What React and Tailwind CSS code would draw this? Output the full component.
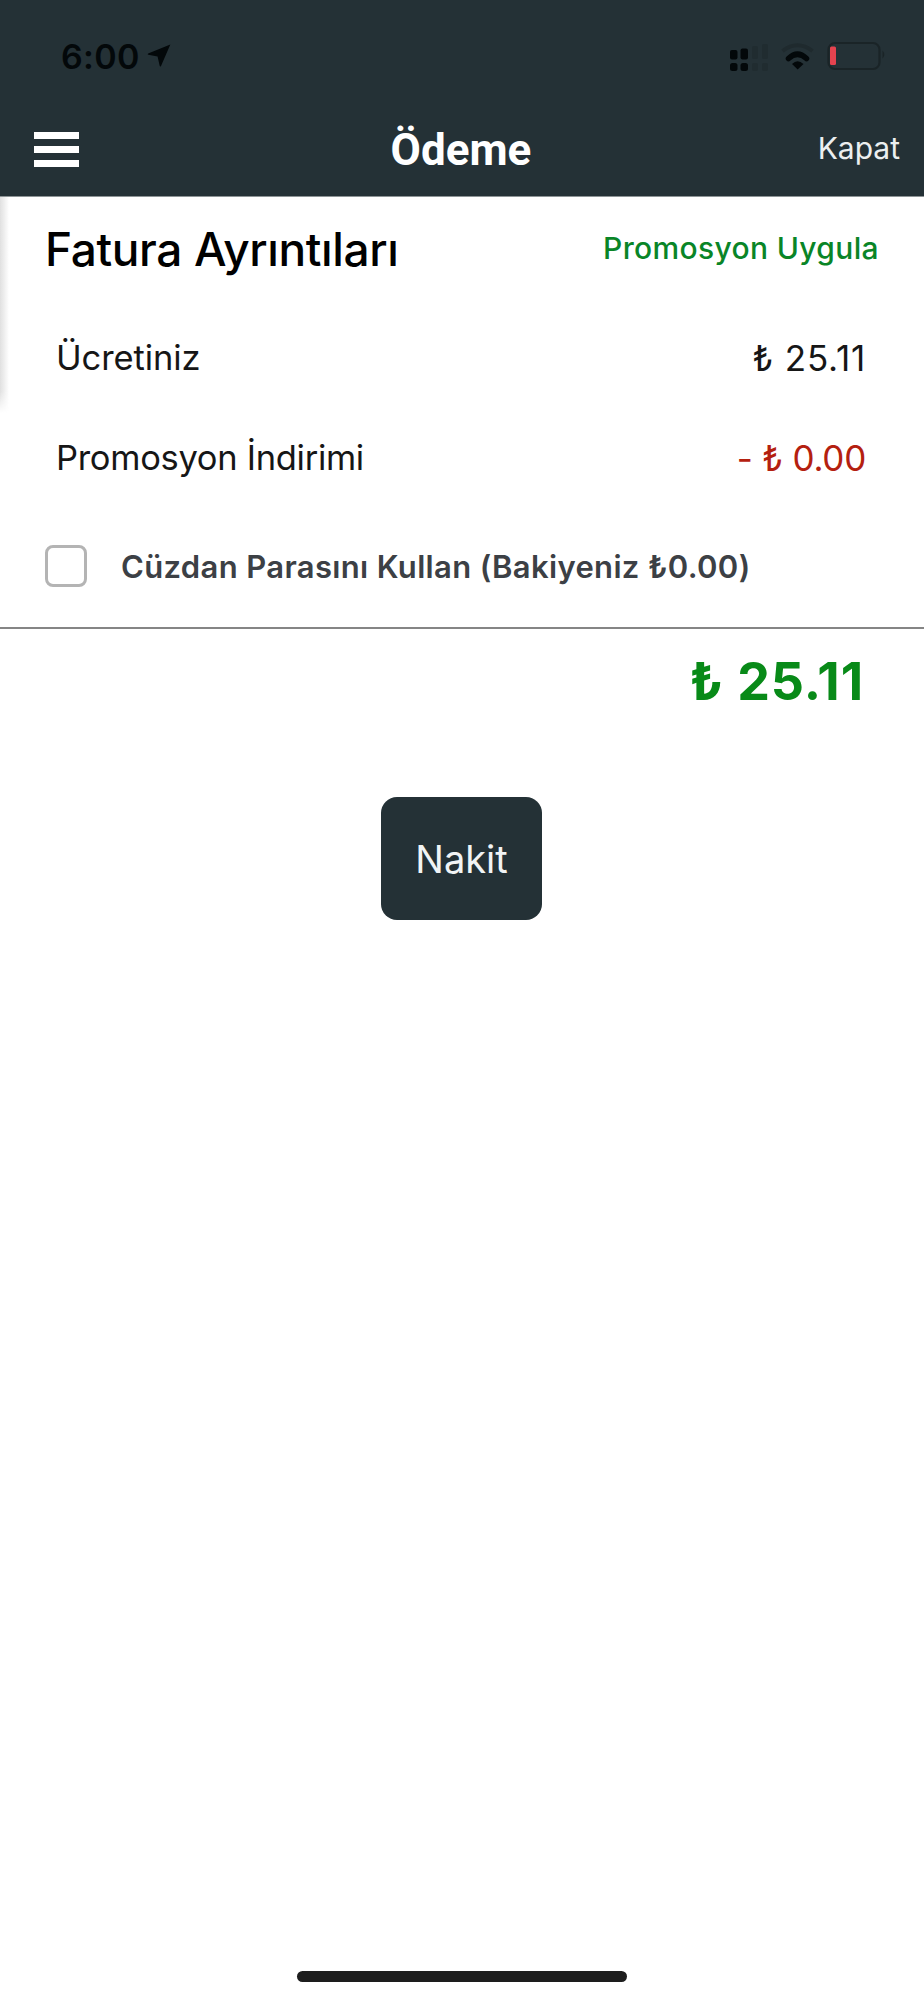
function StatusBar() {
  return (
    <div className="flex h-[100px] items-center justify-between pt-[13px] pr-[37px] pl-[61px]">
      <div className="flex items-center gap-[7px]">
        <span className="text-[34px] leading-none font-semibold tracking-[0.3px] text-[#03080a]">6:00</span>
        <svg width="24" height="25" viewBox="0 0 25 25" fill="#03080a" className="mb-[3px]">
          <path d="M24.3 1 1.2 10.4q-1.2.8.2 1.3l9.6 1.8 2.2 9.8q.6 1.400 1.4.1Z" />
        </svg>
      </div>
      <svg width="162" height="40" viewBox="725 37 162 40" fill="none">
        <g fill="#03080a">
          <rect x="730" y="50" width="7.500" height="9.500" rx="2" />
          <rect x="740.500" y="48.500" width="7.500" height="11" rx="2" />
          <rect x="730" y="63" width="7.500" height="8" rx="2.500" />
          <rect x="740.500" y="63" width="7.500" height="8" rx="2.500" />
        </g>
        <g fill="#202c30">
          <rect x="752" y="46" width="6" height="13" rx="2" />
          <rect x="762" y="44" width="6" height="15" rx="2" />
          <rect x="752" y="63" width="6" height="8" rx="2" />
          <rect x="762" y="63" width="6" height="8" rx="2" />
        </g>
        <path d="M782.500 51Q797.500 39.500 812.500 51" stroke="#1f2a2e" strokeWidth="4" />
        <path d="M788.500 58.500Q797.500 50 806.500 58.500" stroke="#03080a" strokeWidth="5.500" strokeLinecap="round" />
        <path d="M792 64Q797.500 58.500 803.500 64L797.700 69.500Z" fill="#03080a" />
        <rect x="828.500" y="43" width="51" height="26" rx="6.500" stroke="#1a2427" strokeWidth="2.200" />
        <rect x="830" y="46.500" width="6" height="18.500" rx="1.500" fill="#e5434f" />
        <path d="M882.500 50.500Q886 54.500 882.500 58.500Z" fill="#1a2427" />
      </svg>
    </div>
  );
}

function TitleBar() {
  return (
    <div className="grid h-24 grid-cols-3 items-center pr-[24px] pl-[34px]">
      <button aria-label="Menu" className="flex w-[45px] flex-col gap-[7px] pt-[2px]">
        <span className="h-[7px] bg-white" />
        <span className="h-[7px] bg-white" />
        <span className="h-[7px] bg-white" />
      </button>
      <h1 className="-ml-[12px] pt-[3px] text-center font-['Roboto',sans-serif] text-[44px] leading-none font-bold text-white">Ödeme</h1>
      <button className="text-right text-[30px] leading-none text-[#eceff0]">Kapat</button>
    </div>
  );
}

export default function App() {
  return (
    <div className="relative flex h-[2000px] w-[924px] flex-col bg-white font-['Inter',sans-serif] whitespace-nowrap text-[#161616]">
      <header className="h-[197px] border-b border-[#8d9496] bg-[#243136]">
        <StatusBar />
        <TitleBar />
      </header>
      <div className="absolute top-[197px] left-0 h-[216px] w-[9px] bg-linear-to-r from-[#e0e0e0] to-transparent mask-b-from-90%" />

      <main className="flex flex-col">
        <div className="flex h-[104px] items-center justify-between pr-[45px] pl-[45px]">
          <h2 className="text-[46px] leading-none font-medium tracking-[-0.360px] text-black">Fatura Ayrıntıları</h2>
          <button className="mb-[2px] text-[30px] leading-none font-medium tracking-[0.350px] text-[#098527]">Promosyon Uygula</button>
        </div>
        <div className="flex h-[114px] items-center justify-between pr-[58px] pl-[56px] text-[34.500px] leading-none">
          <span className="tracking-[-0.100px]">Ücretiniz</span>
          <span className="text-[35px] tracking-[0.800px]">₺ 25.11</span>
        </div>
        <div className="flex h-[86px] items-center justify-between pr-[58px] pl-[56px] text-[34.500px] leading-none">
          <span className="tracking-[-0.300px]">Promosyon İndirimi</span>
          <span className="text-[35px] tracking-[-0.250px] text-[#b4200f]">- ₺ 0.00</span>
        </div>
        <label className="flex h-[126px] items-center gap-[34px] pt-[4px] pl-[45px]">
          <span className="size-[42px] rounded-[8px] border-[3px] border-[#b4b4b4] bg-white" />
          <span className="pt-[1px] text-[31px] leading-none font-semibold tracking-[0.350px] text-[#3c4045]">
            Cüzdan Parasını Kullan (Bakiyeniz ₺0.00)
          </span>
        </label>
        <div className="h-[2px] bg-[#858585]" />
        <div className="flex h-[104px] items-center justify-end pt-[2px] pr-[60px]">
          <span className="text-[52px] leading-none font-bold tracking-[0.900px] text-[#088a18]">₺ 25.11</span>
        </div>
        <button className="mt-[64px] mr-px flex h-[123px] w-[161px] items-center justify-center self-center rounded-[16px] bg-[#243136] text-[38px] leading-none text-[#f1f4f5]">
          Nakit
        </button>
      </main>

      <div className="mt-auto mb-[18px] h-[11px] w-[330px] self-center rounded-full bg-[#1d1d1d]" />
    </div>
  );
}
